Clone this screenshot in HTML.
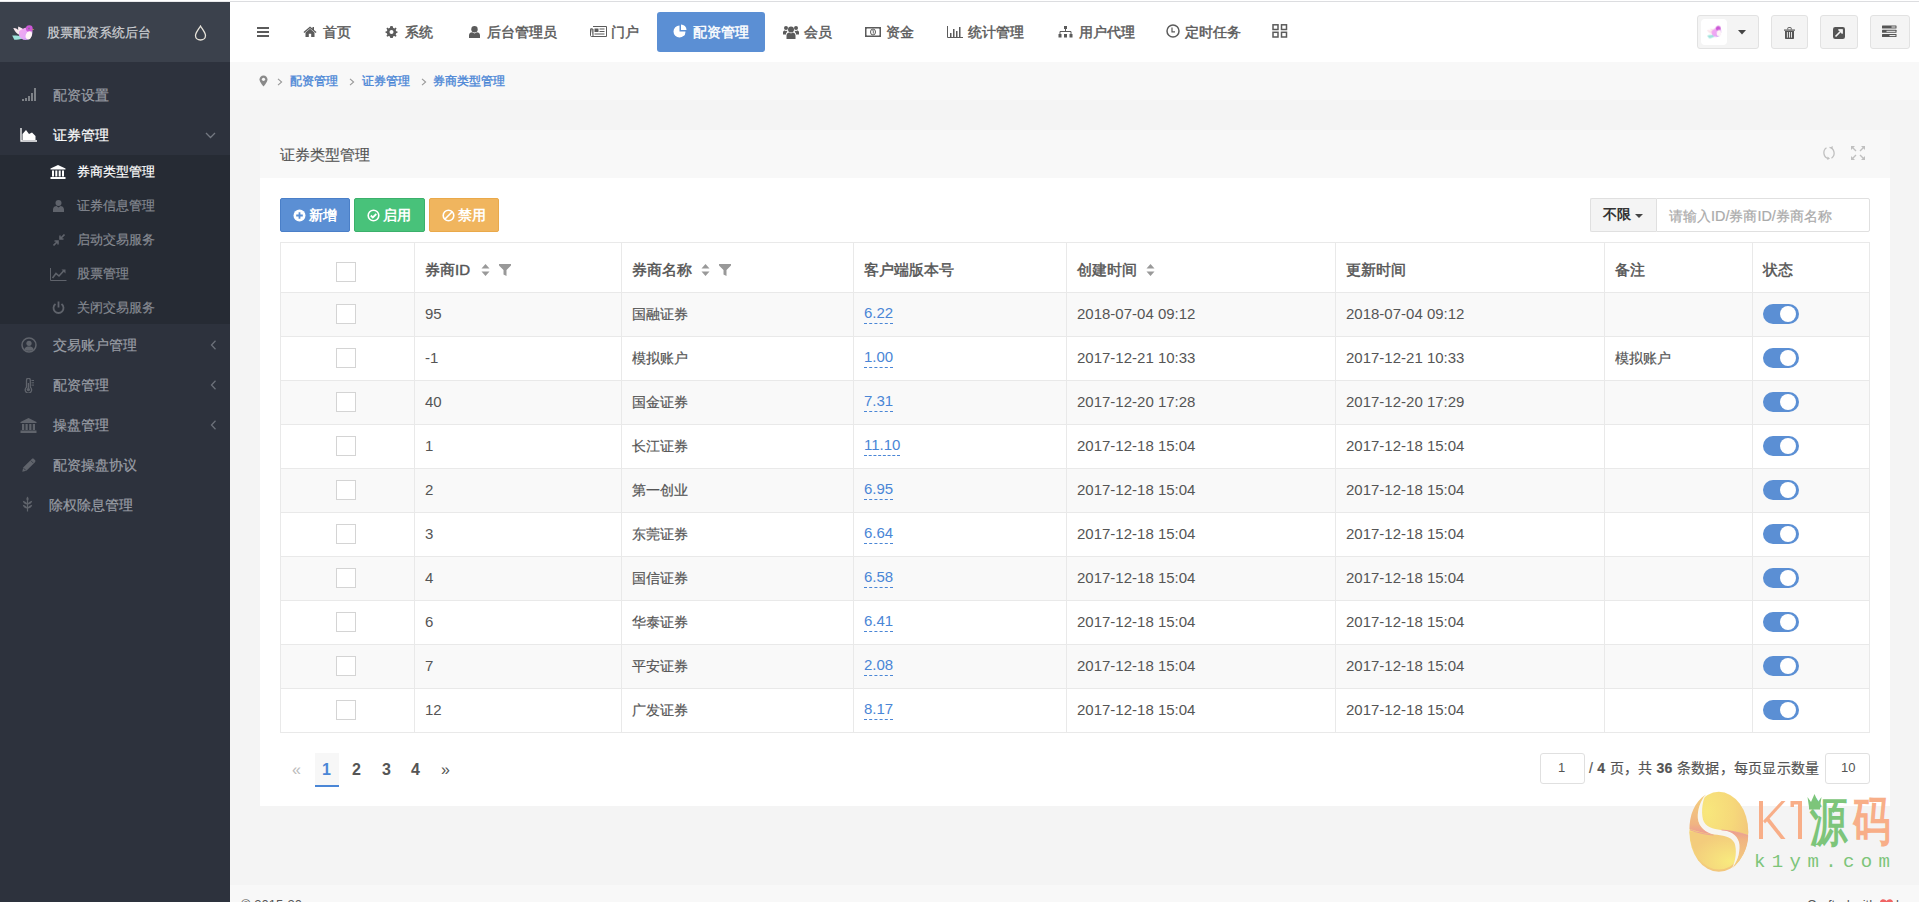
<!DOCTYPE html>
<html><head><meta charset="utf-8"><title>券商类型管理</title>
<style>
html,body{margin:0;padding:0;}
body{width:1919px;height:902px;overflow:hidden;position:relative;background:#f3f3f3;font-family:"Liberation Sans",sans-serif;}
b{font-weight:bold}
</style></head><body>
<div style="position:absolute;left:0px;top:0px;width:1919px;height:1px;background:#fff"></div><div style="position:absolute;left:230px;top:1px;width:1689px;height:1px;background:#dcdde0"></div><div style="position:absolute;left:0px;top:1px;width:230px;height:1px;background:#e9e9eb"></div><div style="position:absolute;left:230px;top:2px;width:1689px;height:60px;background:#fff"></div><div style="position:absolute;left:230px;top:62px;width:1689px;height:38px;background:#f8f8f8"></div><div style="position:absolute;left:230px;top:100px;width:1689px;height:785px;background:#f4f4f4"></div><div style="position:absolute;left:230px;top:885px;width:1689px;height:17px;background:#f8f8f8"></div><div style="position:absolute;left:0px;top:2px;width:230px;height:900px;background:#2d323d"></div><div style="position:absolute;left:0px;top:2px;width:230px;height:60px;background:#3b414c"></div><div style="position:absolute;left:0px;top:155px;width:230px;height:169px;background:#262b34"></div><svg style="position:absolute;left:5px;top:18px;" width="34" height="26" viewBox="0 0 34 26">
<defs><linearGradient id="bd" x1="0" y1="0" x2="1" y2="1"><stop offset="0" stop-color="#f6a8ef"/><stop offset="0.6" stop-color="#e4a6f5"/><stop offset="1" stop-color="#9b7fe6"/></linearGradient></defs>
<path d="M7.2 17.6 C10 17.4 14 17.6 17.5 18.8 L18.5 20.5 C15 21.5 12 21.8 9.3 21.8 Z" fill="#9fe3dc"/>
<path d="M8.3 10 C10 9.8 12 10.5 13.3 12 C13 10.5 13 9.5 13.4 8.6 C15.5 9.5 17.5 10.5 19 11.5 L17 17.5 C13.5 17 10.5 15 8.3 10Z" fill="#fbeaf0"/>
<path d="M14 13.5 C16 11.5 19 10 21.5 9.5 C25 8.5 27.5 10.5 27.5 13.5 C27.5 18 25 21.5 21 22 C18 22.3 15.5 20.5 14 17.5 Z" fill="url(#bd)"/>
<circle cx="24.3" cy="10.6" r="3.4" fill="#cc58d6"/>
<circle cx="24" cy="10.5" r="0.9" fill="#8a6a90"/>
<ellipse cx="23.8" cy="17.3" rx="3" ry="4.2" transform="rotate(20 23.8 17.3)" fill="#fff3f6"/>
<path d="M27.5 11 L29.3 11.5 L27.5 12.2Z" fill="#e9a86a"/>
</svg><div style="position:absolute;left:47px;top:23px;line-height:20px;font-size:13px;color:#cfd1d5;font-weight:normal;white-space:nowrap;-webkit-text-stroke-width:0.2px;">股票配资系统后台</div><svg style="position:absolute;left:194px;top:25px;" width="13" height="16" viewBox="0 0 13 16"><path d="M6.5 1 C4 5 1.5 8 1.5 10.5 C1.5 13.3 3.8 15 6.5 15 C9.2 15 11.5 13.3 11.5 10.5 C11.5 8 9 5 6.5 1Z" fill="none" stroke="#e8e4da" stroke-width="1.3"/></svg><svg style="position:absolute;left:22px;top:88px;" width="15" height="14" viewBox="0 0 15 14"><rect x="0" y="11" width="2" height="2" fill="#7d8187"/><rect x="3" y="10" width="2" height="3" fill="#7d8187"/><rect x="6" y="8" width="2" height="5" fill="#7d8187"/><rect x="9" y="5" width="2" height="8" fill="#7d8187"/><rect x="12" y="0" width="2" height="13" fill="#7d8187"/></svg><div style="position:absolute;left:53px;top:85px;line-height:20px;font-size:14px;color:#9a9ea5;font-weight:normal;white-space:nowrap;-webkit-text-stroke-width:0.2px;">配资设置</div><svg style="position:absolute;left:20px;top:128px;" width="18" height="14" viewBox="0 0 18 14"><path d="M1 0 V13 H17" fill="none" stroke="#fff" stroke-width="1.3"/><path d="M2.5 12 V6 L6 2 L9 6 L12 4.5 L15.5 8 V12Z" fill="#fff"/></svg><div style="position:absolute;left:53px;top:125px;line-height:20px;font-size:14px;color:#ffffff;font-weight:normal;white-space:nowrap;-webkit-text-stroke-width:0.2px;">证券管理</div><svg style="position:absolute;left:205px;top:132px;" width="11" height="7" viewBox="0 0 11 7"><path d="M1 1 L5.5 5.5 L10 1" fill="none" stroke="#737881" stroke-width="1.3"/></svg><svg style="position:absolute;left:50px;top:165px;" width="16" height="14" viewBox="0 0 16 14"><path d="M8 0 L15.5 3.5 V4.5 H0.5 V3.5Z" fill="#fff"/><rect x="2" y="5.5" width="2" height="6" fill="#fff"/><rect x="5.3" y="5.5" width="2" height="6" fill="#fff"/><rect x="8.7" y="5.5" width="2" height="6" fill="#fff"/><rect x="12" y="5.5" width="2" height="6" fill="#fff"/><rect x="0.5" y="12" width="15" height="2" fill="#fff"/></svg><div style="position:absolute;left:77px;top:162px;line-height:20px;font-size:13px;color:#ffffff;font-weight:normal;white-space:nowrap;-webkit-text-stroke-width:0.2px;">券商类型管理</div><svg style="position:absolute;left:53px;top:200px;" width="11" height="12" viewBox="0 0 11 12"><circle cx="5.5" cy="3" r="3" fill="#5f636b"/><path d="M0 12 V9.5 C0 7 2 6 3.5 6 L5.5 7.5 L7.5 6 C9 6 11 7 11 9.5 V12Z" fill="#5f636b"/></svg><div style="position:absolute;left:77px;top:196px;line-height:20px;font-size:13px;color:#858991;font-weight:normal;white-space:nowrap;-webkit-text-stroke-width:0.2px;">证券信息管理</div><svg style="position:absolute;left:53px;top:234px;" width="12" height="12" viewBox="0 0 12 12"><path d="M11.5 0.5 L7.5 4.5 M7 1.5 V5 H10.5 M0.5 11.5 L4.5 7.5 M1.5 7 H5 V10.5" fill="none" stroke="#5f636b" stroke-width="1.6"/></svg><div style="position:absolute;left:77px;top:230px;line-height:20px;font-size:13px;color:#858991;font-weight:normal;white-space:nowrap;-webkit-text-stroke-width:0.2px;">启动交易服务</div><svg style="position:absolute;left:50px;top:268px;" width="17" height="13" viewBox="0 0 17 13"><path d="M0.5 0 V12.5 H16.5" fill="none" stroke="#5f636b" stroke-width="1"/><path d="M2.5 10 L6 5.5 L9 8 L14 2.5" fill="none" stroke="#5f636b" stroke-width="1.6"/><path d="M11.5 1.5 H15.5 V5.5Z" fill="#5f636b"/></svg><div style="position:absolute;left:77px;top:264px;line-height:20px;font-size:13px;color:#858991;font-weight:normal;white-space:nowrap;-webkit-text-stroke-width:0.2px;">股票管理</div><svg style="position:absolute;left:52px;top:301px;" width="13" height="13" viewBox="0 0 13 13"><path d="M3.5 3 A5 5 0 1 0 9.5 3" fill="none" stroke="#5f636b" stroke-width="1.8"/><path d="M6.5 0.5 V6.5" stroke="#5f636b" stroke-width="1.8"/></svg><div style="position:absolute;left:77px;top:298px;line-height:20px;font-size:13px;color:#858991;font-weight:normal;white-space:nowrap;-webkit-text-stroke-width:0.2px;">关闭交易服务</div><svg style="position:absolute;left:21px;top:337px;" width="16" height="16" viewBox="0 0 16 16"><circle cx="8" cy="8" r="7" fill="none" stroke="#60646c" stroke-width="1.5"/><circle cx="8" cy="6.3" r="2.6" fill="#60646c"/><path d="M3.2 12.5 C4 10 6 9.5 8 9.5 C10 9.5 12 10 12.8 12.5 C11 14.3 5 14.3 3.2 12.5Z" fill="#60646c"/></svg><div style="position:absolute;left:53px;top:335px;line-height:20px;font-size:14px;color:#9a9ea5;font-weight:normal;white-space:nowrap;-webkit-text-stroke-width:0.2px;">交易账户管理</div><svg style="position:absolute;left:210px;top:340px;" width="7" height="10" viewBox="0 0 7 10"><path d="M5.5 0.8 L1.5 5 L5.5 9.2" fill="none" stroke="#6b7079" stroke-width="1.3"/></svg><svg style="position:absolute;left:24px;top:378px;" width="11" height="15" viewBox="0 0 11 15"><path d="M2.5 2.2 A1.9 1.9 0 0 1 6.3 2.2 V9.3 A3.2 3.2 0 1 1 2.5 9.3Z" fill="none" stroke="#60646c" stroke-width="1.3"/><circle cx="4.4" cy="11.6" r="1.7" fill="#60646c"/><path d="M4.4 5 V11" stroke="#60646c" stroke-width="1.3"/><path d="M7.5 2.5 H10 M7.5 4.8 H10 M7.5 7.1 H10" stroke="#60646c" stroke-width="1"/></svg><div style="position:absolute;left:53px;top:375px;line-height:20px;font-size:14px;color:#9a9ea5;font-weight:normal;white-space:nowrap;-webkit-text-stroke-width:0.2px;">配资管理</div><svg style="position:absolute;left:210px;top:380px;" width="7" height="10" viewBox="0 0 7 10"><path d="M5.5 0.8 L1.5 5 L5.5 9.2" fill="none" stroke="#6b7079" stroke-width="1.3"/></svg><svg style="position:absolute;left:20px;top:418px;" width="17" height="15" viewBox="0 0 17 15"><path d="M8.5 0 L16.5 4 V5 H0.5 V4Z" fill="#60646c"/><rect x="2" y="6" width="2.2" height="6" fill="#60646c"/><rect x="5.5" y="6" width="2.2" height="6" fill="#60646c"/><rect x="9.2" y="6" width="2.2" height="6" fill="#60646c"/><rect x="12.8" y="6" width="2.2" height="6" fill="#60646c"/><rect x="0.5" y="12.5" width="16" height="2.5" fill="#60646c"/></svg><div style="position:absolute;left:53px;top:415px;line-height:20px;font-size:14px;color:#9a9ea5;font-weight:normal;white-space:nowrap;-webkit-text-stroke-width:0.2px;">操盘管理</div><svg style="position:absolute;left:210px;top:420px;" width="7" height="10" viewBox="0 0 7 10"><path d="M5.5 0.8 L1.5 5 L5.5 9.2" fill="none" stroke="#6b7079" stroke-width="1.3"/></svg><svg style="position:absolute;left:22px;top:458px;" width="14" height="14" viewBox="0 0 14 14"><path d="M0.3 13.7 L1.2 9.6 L9.8 1 C10.4 0.4 11.3 0.4 11.9 1 L13 2.1 C13.6 2.7 13.6 3.6 13 4.2 L4.4 12.8Z" fill="#60646c"/><path d="M1.6 10.2 L3.8 12.4" stroke="#2d323d" stroke-width="0.8"/><path d="M8.8 2.6 L11.4 5.2" stroke="#2d323d" stroke-width="0.7"/></svg><div style="position:absolute;left:53px;top:455px;line-height:20px;font-size:14px;color:#9a9ea5;font-weight:normal;white-space:nowrap;-webkit-text-stroke-width:0.2px;">配资操盘协议</div><svg style="position:absolute;left:22px;top:496px;" width="11" height="16" viewBox="0 0 11 16"><path d="M5.5 0.5 C7 2 7 4 5.5 5.5 C4 4 4 2 5.5 0.5Z" fill="#60646c"/><path d="M5.5 15.5 V5" stroke="#60646c" stroke-width="1.2"/><path d="M5.5 8.5 C3 8.5 1 7 0.8 4.8 C3 5 5 6.5 5.5 8.5Z M5.5 8.5 C8 8.5 10 7 10.2 4.8 C8 5 6 6.5 5.5 8.5Z M5.5 12.5 C3 12.5 1 11 0.8 8.8 C3 9 5 10.5 5.5 12.5Z M5.5 12.5 C8 12.5 10 11 10.2 8.8 C8 9 6 10.5 5.5 12.5Z" fill="#60646c"/></svg><div style="position:absolute;left:49px;top:495px;line-height:20px;font-size:14px;color:#9a9ea5;font-weight:normal;white-space:nowrap;-webkit-text-stroke-width:0.2px;">除权除息管理</div><svg style="position:absolute;left:257px;top:27px;" width="13" height="10" viewBox="0 0 13 10"><rect x="0" y="0" width="12" height="2" fill="#5b5b5b"/><rect x="0" y="4" width="12" height="2" fill="#5b5b5b"/><rect x="0" y="8" width="12" height="2" fill="#5b5b5b"/></svg><svg style="position:absolute;left:303px;top:26px;" width="14" height="11" viewBox="0 0 14 11"><path d="M7 0.5 L0.5 6 L1.3 7 L7 2.2 L12.7 7 L13.5 6 L11 3.9 V1 H9.5 V2.6Z" fill="#5b5b5b"/><path d="M2.5 6.5 L7 2.8 L11.5 6.5 V11 H8.2 V7.8 H5.8 V11 H2.5Z" fill="#5b5b5b"/></svg><div style="position:absolute;left:323px;top:22px;line-height:20px;font-size:14px;color:#5b5b5b;font-weight:normal;white-space:nowrap;-webkit-text-stroke-width:0.2px;-webkit-text-stroke-width:0.45px">首页</div><svg style="position:absolute;left:385px;top:26px;" width="13" height="12" viewBox="0 0 13 13"><path d="M6.5 0 L7.9 0.3 L8.2 2 L9.6 2.7 L11 1.7 L12 2.8 L11 4.3 L11.6 5.6 L13 6 V7.4 L11.5 7.8 L11 9.2 L12 10.6 L11 11.7 L9.5 10.8 L8.2 11.4 L7.9 13 H6.5 L5.2 13 L4.8 11.4 L3.5 10.8 L2 11.7 L1 10.6 L2 9.2 L1.5 7.8 L0 7.4 V6 L1.4 5.6 L2 4.3 L1 2.8 L2 1.7 L3.4 2.7 L4.8 2 L5.1 0.3Z" fill="#5b5b5b"/><circle cx="6.5" cy="6.5" r="2.2" fill="#fff"/></svg><div style="position:absolute;left:405px;top:22px;line-height:20px;font-size:14px;color:#5b5b5b;font-weight:normal;white-space:nowrap;-webkit-text-stroke-width:0.2px;-webkit-text-stroke-width:0.45px">系统</div><svg style="position:absolute;left:469px;top:26px;" width="11" height="12" viewBox="0 0 11 12"><circle cx="5.5" cy="3.2" r="3.2" fill="#5b5b5b"/><path d="M0 12 V9.2 C0 7.2 1.5 6.2 3.2 6.2 L5.5 7.4 L7.8 6.2 C9.5 6.2 11 7.2 11 9.2 V12Z" fill="#5b5b5b"/></svg><div style="position:absolute;left:487px;top:22px;line-height:20px;font-size:14px;color:#5b5b5b;font-weight:normal;white-space:nowrap;-webkit-text-stroke-width:0.2px;-webkit-text-stroke-width:0.45px">后台管理员</div><svg style="position:absolute;left:590px;top:26px;" width="17" height="11" viewBox="0 0 17 11"><path d="M3 0.5 H16.5 V10.5 H1.5 C0.8 10.5 0.5 10 0.5 9.5 V3 H2" fill="none" stroke="#5b5b5b" stroke-width="1"/><path d="M0.5 3 H3 V10" fill="#aaa" stroke="#5b5b5b" stroke-width="1"/><rect x="4.5" y="2.5" width="4" height="3.5" fill="#5b5b5b"/><rect x="9.5" y="2.5" width="5" height="1" fill="#5b5b5b"/><rect x="9.5" y="5" width="5" height="1" fill="#5b5b5b"/><rect x="4.5" y="7.5" width="10" height="1" fill="#5b5b5b"/></svg><div style="position:absolute;left:611px;top:22px;line-height:20px;font-size:14px;color:#5b5b5b;font-weight:normal;white-space:nowrap;-webkit-text-stroke-width:0.2px;-webkit-text-stroke-width:0.45px">门户</div><div style="position:absolute;left:657px;top:12px;width:108px;height:40px;background:#5b8fd4;border-radius:3px"></div><svg style="position:absolute;left:673px;top:24px;" width="15" height="14" viewBox="0 0 15 14"><path d="M6.5 1.5 A6 6 0 1 0 12.5 7.5 H6.5Z" fill="#fff"/><path d="M8 0.5 A5.5 5.5 0 0 1 13.5 6 H8Z" fill="#fff"/><path d="M7.6 8.6 L12.2 8.6 A5.8 5.8 0 0 1 11 12 Z" fill="#fff"/></svg><div style="position:absolute;left:693px;top:22px;line-height:20px;font-size:14px;color:#ffffff;font-weight:normal;white-space:nowrap;-webkit-text-stroke-width:0.2px;-webkit-text-stroke-width:0.45px">配资管理</div><svg style="position:absolute;left:783px;top:25px;" width="16" height="14" viewBox="0 0 16 14"><circle cx="8" cy="4.5" r="3" fill="#5b5b5b"/><circle cx="3" cy="3" r="2" fill="#5b5b5b"/><circle cx="13" cy="3" r="2" fill="#5b5b5b"/><path d="M3.5 14 V10.5 C3.5 8.5 5 7.5 6.5 7.5 L8 8.5 L9.5 7.5 C11 7.5 12.5 8.5 12.5 10.5 V14Z" fill="#5b5b5b"/><path d="M0 9.5 V7.3 C0 6 1 5.5 2 5.5 L3 6.2 L4.2 5.6 C4.5 6.5 4 7 3 8.5 V9.5Z" fill="#5b5b5b"/><path d="M16 9.5 V7.3 C16 6 15 5.5 14 5.5 L13 6.2 L11.8 5.6 C11.5 6.5 12 7 13 8.5 V9.5Z" fill="#5b5b5b"/></svg><div style="position:absolute;left:804px;top:22px;line-height:20px;font-size:14px;color:#5b5b5b;font-weight:normal;white-space:nowrap;-webkit-text-stroke-width:0.2px;-webkit-text-stroke-width:0.45px">会员</div><svg style="position:absolute;left:865px;top:27px;" width="16" height="10" viewBox="0 0 16 10"><rect x="0.75" y="0.75" width="14.5" height="8.5" fill="none" stroke="#5b5b5b" stroke-width="1.5"/><path d="M0 0 H3 L0 3Z M16 0 H13 L16 3Z M0 10 H3 L0 7Z M16 10 H13 L16 7Z" fill="#5b5b5b"/><ellipse cx="8" cy="5" rx="2.5" ry="3" fill="none" stroke="#5b5b5b" stroke-width="1"/><path d="M7.5 3.5 H8.3 V6.6" stroke="#5b5b5b" stroke-width="0.9" fill="none"/></svg><div style="position:absolute;left:886px;top:22px;line-height:20px;font-size:14px;color:#5b5b5b;font-weight:normal;white-space:nowrap;-webkit-text-stroke-width:0.2px;-webkit-text-stroke-width:0.45px">资金</div><svg style="position:absolute;left:947px;top:26px;" width="16" height="12" viewBox="0 0 16 12"><path d="M0.5 0 V11.5 H16" fill="none" stroke="#5b5b5b" stroke-width="1"/><rect x="3" y="7" width="1.5" height="4" fill="#5b5b5b"/><rect x="6" y="3" width="1.5" height="8" fill="#5b5b5b"/><rect x="9" y="5" width="1.5" height="6" fill="#5b5b5b"/><rect x="12" y="1" width="1.5" height="10" fill="#5b5b5b"/></svg><div style="position:absolute;left:968px;top:22px;line-height:20px;font-size:14px;color:#5b5b5b;font-weight:normal;white-space:nowrap;-webkit-text-stroke-width:0.2px;-webkit-text-stroke-width:0.45px">统计管理</div><svg style="position:absolute;left:1058px;top:26px;" width="15" height="12" viewBox="0 0 15 12"><rect x="6" y="0" width="3" height="3" fill="#5b5b5b"/><path d="M7.5 3 V5.5 M2 8 V5.5 H13 V8" fill="none" stroke="#5b5b5b" stroke-width="1"/><rect x="0.5" y="8" width="3" height="3.5" fill="#5b5b5b"/><rect x="6" y="8" width="3" height="3.5" fill="#5b5b5b"/><rect x="11.5" y="8" width="3" height="3.5" fill="#5b5b5b"/></svg><div style="position:absolute;left:1079px;top:22px;line-height:20px;font-size:14px;color:#5b5b5b;font-weight:normal;white-space:nowrap;-webkit-text-stroke-width:0.2px;-webkit-text-stroke-width:0.45px">用户代理</div><svg style="position:absolute;left:1166px;top:24px;" width="14" height="14" viewBox="0 0 14 14"><circle cx="7" cy="7" r="6" fill="none" stroke="#5b5b5b" stroke-width="1.5"/><path d="M6 3.5 V7.8 H9" fill="none" stroke="#5b5b5b" stroke-width="1.2"/></svg><div style="position:absolute;left:1185px;top:22px;line-height:20px;font-size:14px;color:#5b5b5b;font-weight:normal;white-space:nowrap;-webkit-text-stroke-width:0.2px;-webkit-text-stroke-width:0.45px">定时任务</div><svg style="position:absolute;left:1272px;top:24px;" width="16" height="14" viewBox="0 0 16 14"><rect x="1" y="0.8" width="5" height="4.7" fill="none" stroke="#5b5b5b" stroke-width="1.5"/><rect x="9.5" y="0.8" width="5" height="4.7" fill="none" stroke="#5b5b5b" stroke-width="1.5"/><rect x="1" y="8.3" width="5" height="4.7" fill="none" stroke="#5b5b5b" stroke-width="1.5"/><rect x="9.5" y="8.3" width="5" height="4.7" fill="none" stroke="#5b5b5b" stroke-width="1.5"/></svg><div style="position:absolute;left:1697px;top:15px;width:60px;height:32px;background:#f4f4f4;border:1px solid #e2e2e2;border-radius:3px"></div><div style="position:absolute;left:1701px;top:19px;width:26px;height:26px;background:#fff;border-radius:4px"></div><svg style="position:absolute;left:1700px;top:20px;" width="28" height="24" viewBox="0 0 28 24">
<defs><filter id="bl" x="-20%" y="-20%" width="140%" height="140%"><feGaussianBlur stdDeviation="0.45"/></filter>
<linearGradient id="bd2" x1="0" y1="0" x2="1" y2="1"><stop offset="0" stop-color="#f6a8ef"/><stop offset="0.6" stop-color="#e9a6f5"/><stop offset="1" stop-color="#9b7fe6"/></linearGradient></defs>
<g filter="url(#bl)" transform="translate(7 7) rotate(-12 11 7) scale(0.72) translate(-7 -8.6)">
<path d="M7.2 17.6 C10 17.4 14 17.6 17.5 18.8 L18.5 20.5 C15 21.5 12 21.8 9.3 21.8 Z" fill="#9fe3dc"/>
<path d="M8.3 10 C10 9.8 12 10.5 13.3 12 C13 10.5 13 9.5 13.4 8.6 C15.5 9.5 17.5 10.5 19 11.5 L17 17.5 C13.5 17 10.5 15 8.3 10Z" fill="#fbe3ea"/>
<path d="M14 13.5 C16 11.5 19 10 21.5 9.5 C25 8.5 27.5 10.5 27.5 13.5 C27.5 18 25 21.5 21 22 C18 22.3 15.5 20.5 14 17.5 Z" fill="url(#bd2)"/>
<circle cx="24.3" cy="10.6" r="3.4" fill="#cc58d6"/>
<ellipse cx="23.8" cy="17.3" rx="3" ry="4.2" transform="rotate(20 23.8 17.3)" fill="#fff3f6"/>
</g>
</svg><svg style="position:absolute;left:1738px;top:30px;" width="8" height="5" viewBox="0 0 8 5"><path d="M0 0 H8 L4 4.5Z" fill="#444"/></svg><div style="position:absolute;left:1771px;top:15px;width:35px;height:32px;background:#f4f4f4;border:1px solid #e2e2e2;border-radius:3px"></div><svg style="position:absolute;left:1784px;top:27px;" width="11" height="12" viewBox="0 0 11 12"><path d="M0 2.5 H11 V3.7 H0Z" fill="#555"/><path d="M3.8 2.5 V1.2 C3.8 0.6 4.2 0.4 4.6 0.4 H6.4 C6.8 0.4 7.2 0.6 7.2 1.2 V2.5" fill="none" stroke="#555" stroke-width="1"/><path d="M1 4 H10 V11 C10 11.6 9.6 12 9 12 H2 C1.4 12 1 11.6 1 11Z" fill="#555"/><rect x="2.9" y="5" width="0.9" height="5.6" fill="#f4f4f4"/><rect x="5" y="5" width="0.9" height="5.6" fill="#f4f4f4"/><rect x="7.1" y="5" width="0.9" height="5.6" fill="#f4f4f4"/></svg><div style="position:absolute;left:1820px;top:15px;width:36px;height:32px;background:#f4f4f4;border:1px solid #e2e2e2;border-radius:3px"></div><svg style="position:absolute;left:1833px;top:27px;" width="12" height="12" viewBox="0 0 12 12"><rect x="0" y="0" width="12" height="12" rx="2.2" fill="#555"/><path d="M2.5 9.5 L8.5 3.5 M5.5 3 H9 V6.5" fill="none" stroke="#f4f4f4" stroke-width="1.6"/><path d="M9.5 2.5 V7 L5 2.5Z" fill="#f4f4f4"/></svg><div style="position:absolute;left:1870px;top:15px;width:38px;height:32px;background:#f4f4f4;border:1px solid #e2e2e2;border-radius:3px"></div><svg style="position:absolute;left:1882px;top:25px;" width="15" height="13" viewBox="0 0 15 13"><rect x="0" y="0.5" width="14.5" height="3" rx="0.5" fill="#555"/><rect x="0" y="4.8" width="14.5" height="3" rx="0.5" fill="#555"/><rect x="0" y="9.1" width="14.5" height="3" rx="0.5" fill="#555"/><rect x="9.5" y="1.5" width="4" height="1" fill="#f4f4f4"/><rect x="4.5" y="5.8" width="9" height="1" fill="#f4f4f4"/><rect x="7.5" y="10.1" width="6" height="1" fill="#f4f4f4"/></svg><svg style="position:absolute;left:259px;top:75px;" width="9" height="12" viewBox="0 0 9 12"><path d="M4.5 0.5 C2.2 0.5 0.5 2.3 0.5 4.5 C0.5 7 4.5 11.5 4.5 11.5 C4.5 11.5 8.5 7 8.5 4.5 C8.5 2.3 6.8 0.5 4.5 0.5Z" fill="#8a8a8a"/><circle cx="4.5" cy="4.3" r="1.6" fill="#f8f8f8"/></svg><svg style="position:absolute;left:277px;top:78px;" width="6" height="8" viewBox="0 0 6 8"><path d="M1 0.8 L4.6 4 L1 7.2" fill="none" stroke="#999" stroke-width="1.1"/></svg><div style="position:absolute;left:290px;top:71px;line-height:20px;font-size:12px;color:#4a86d6;font-weight:normal;white-space:nowrap;-webkit-text-stroke-width:0.2px;-webkit-text-stroke-width:0.35px">配资管理</div><svg style="position:absolute;left:349px;top:78px;" width="6" height="8" viewBox="0 0 6 8"><path d="M1 0.8 L4.6 4 L1 7.2" fill="none" stroke="#999" stroke-width="1.1"/></svg><div style="position:absolute;left:362px;top:71px;line-height:20px;font-size:12px;color:#4a86d6;font-weight:normal;white-space:nowrap;-webkit-text-stroke-width:0.2px;-webkit-text-stroke-width:0.35px">证券管理</div><svg style="position:absolute;left:421px;top:78px;" width="6" height="8" viewBox="0 0 6 8"><path d="M1 0.8 L4.6 4 L1 7.2" fill="none" stroke="#999" stroke-width="1.1"/></svg><div style="position:absolute;left:433px;top:71px;line-height:20px;font-size:12px;color:#4a86d6;font-weight:normal;white-space:nowrap;-webkit-text-stroke-width:0.2px;-webkit-text-stroke-width:0.35px">券商类型管理</div><div style="position:absolute;left:260px;top:130px;width:1630px;height:48px;background:#f8f8f8"></div><div style="position:absolute;left:260px;top:178px;width:1630px;height:628px;background:#fff"></div><div style="position:absolute;left:280px;top:145px;line-height:20px;font-size:15px;color:#555;font-weight:normal;white-space:nowrap;-webkit-text-stroke-width:0.2px;">证券类型管理</div><svg style="position:absolute;left:1822px;top:145px;" width="16" height="16" viewBox="0 0 16 16"><path d="M4.5 2.8 A6 6 0 0 0 6.5 13.6" fill="none" stroke="#c0c0c0" stroke-width="1.3"/><path d="M9.5 13.2 A6 6 0 0 0 7.5 2.4" fill="none" stroke="#c0c0c0" stroke-width="1.3"/><path d="M5.5 11.5 L8 13.5 L5.2 15Z" fill="#c0c0c0"/><path d="M10.5 4.5 L8 2.5 L10.8 1Z" fill="#c0c0c0"/></svg><svg style="position:absolute;left:1850px;top:145px;" width="16" height="16" viewBox="0 0 16 16"><path d="M1.5 1.5 L6 6 M14.5 1.5 L10 6 M1.5 14.5 L6 10 M14.5 14.5 L10 10" stroke="#c0c0c0" stroke-width="1.4"/><path d="M1 1 H5 L1 5Z M15 1 H11 L15 5Z M1 15 H5 L1 11Z M15 15 H11 L15 11Z" fill="#c0c0c0"/></svg><div style="position:absolute;left:280px;top:198px;width:68px;height:32px;background:#5b8fd4;border:1px solid #4a7fc8;border-radius:2px"></div><svg style="position:absolute;left:293px;top:209px;" width="13" height="13" viewBox="0 0 13 13"><circle cx="6.5" cy="6.5" r="6" fill="#fff"/><path d="M6.5 3.2 V9.8 M3.2 6.5 H9.8" stroke="#5b8fd4" stroke-width="1.8"/></svg><div style="position:absolute;left:309px;top:205px;line-height:20px;font-size:14px;color:#fff;font-weight:bold;white-space:nowrap;">新增</div><div style="position:absolute;left:354px;top:198px;width:69px;height:32px;background:#48c27a;border:1px solid #3bb06b;border-radius:2px"></div><svg style="position:absolute;left:367px;top:209px;" width="13" height="13" viewBox="0 0 13 13"><circle cx="6.5" cy="6.5" r="5.3" fill="none" stroke="#fff" stroke-width="1.6"/><path d="M3.8 6.5 L5.8 8.5 L9.3 5" fill="none" stroke="#fff" stroke-width="1.8"/></svg><div style="position:absolute;left:383px;top:205px;line-height:20px;font-size:14px;color:#fff;font-weight:bold;white-space:nowrap;">启用</div><div style="position:absolute;left:429px;top:198px;width:68px;height:32px;background:#f0b55e;border:1px solid #eaa94a;border-radius:2px"></div><svg style="position:absolute;left:442px;top:209px;" width="13" height="13" viewBox="0 0 13 13"><circle cx="6.5" cy="6.5" r="5.3" fill="none" stroke="#fff" stroke-width="1.6"/><path d="M3 10 L10 3" stroke="#fff" stroke-width="1.6"/></svg><div style="position:absolute;left:458px;top:205px;line-height:20px;font-size:14px;color:#fff;font-weight:bold;white-space:nowrap;">禁用</div><div style="position:absolute;left:1590px;top:198px;width:65px;height:32px;background:#f4f4f4;border:1px solid #e0e0e0;border-right:none;border-radius:2px 0 0 2px"></div><div style="position:absolute;left:1603px;top:204px;line-height:20px;font-size:14px;color:#333;font-weight:bold;white-space:nowrap;">不限</div><svg style="position:absolute;left:1635px;top:214px;" width="8" height="5" viewBox="0 0 8 5"><path d="M0 0 H8 L4 4Z" fill="#444"/></svg><div style="position:absolute;left:1656px;top:198px;width:212px;height:32px;background:#fff;border:1px solid #e0e0e0;border-radius:0 2px 2px 0"></div><div style="position:absolute;left:1669px;top:206px;line-height:20px;font-size:14.4px;color:#aaa;font-weight:normal;white-space:nowrap;-webkit-text-stroke-width:0.2px;">请输入ID/券商ID/券商名称</div><div style="position:absolute;left:280px;top:292px;width:1590px;height:44px;background:#f9f9f9"></div><div style="position:absolute;left:280px;top:380px;width:1590px;height:44px;background:#f9f9f9"></div><div style="position:absolute;left:280px;top:468px;width:1590px;height:44px;background:#f9f9f9"></div><div style="position:absolute;left:280px;top:556px;width:1590px;height:44px;background:#f9f9f9"></div><div style="position:absolute;left:280px;top:644px;width:1590px;height:44px;background:#f9f9f9"></div><div style="position:absolute;left:280px;top:242px;width:1590px;height:1px;background:#e9e9e9"></div><div style="position:absolute;left:280px;top:292px;width:1590px;height:1px;background:#e9e9e9"></div><div style="position:absolute;left:280px;top:336px;width:1590px;height:1px;background:#e9e9e9"></div><div style="position:absolute;left:280px;top:380px;width:1590px;height:1px;background:#e9e9e9"></div><div style="position:absolute;left:280px;top:424px;width:1590px;height:1px;background:#e9e9e9"></div><div style="position:absolute;left:280px;top:468px;width:1590px;height:1px;background:#e9e9e9"></div><div style="position:absolute;left:280px;top:512px;width:1590px;height:1px;background:#e9e9e9"></div><div style="position:absolute;left:280px;top:556px;width:1590px;height:1px;background:#e9e9e9"></div><div style="position:absolute;left:280px;top:600px;width:1590px;height:1px;background:#e9e9e9"></div><div style="position:absolute;left:280px;top:644px;width:1590px;height:1px;background:#e9e9e9"></div><div style="position:absolute;left:280px;top:688px;width:1590px;height:1px;background:#e9e9e9"></div><div style="position:absolute;left:280px;top:732px;width:1590px;height:1px;background:#e9e9e9"></div><div style="position:absolute;left:280px;top:242px;width:1px;height:491px;background:#e9e9e9"></div><div style="position:absolute;left:414px;top:242px;width:1px;height:491px;background:#e9e9e9"></div><div style="position:absolute;left:621px;top:242px;width:1px;height:491px;background:#e9e9e9"></div><div style="position:absolute;left:853px;top:242px;width:1px;height:491px;background:#e9e9e9"></div><div style="position:absolute;left:1066px;top:242px;width:1px;height:491px;background:#e9e9e9"></div><div style="position:absolute;left:1335px;top:242px;width:1px;height:491px;background:#e9e9e9"></div><div style="position:absolute;left:1604px;top:242px;width:1px;height:491px;background:#e9e9e9"></div><div style="position:absolute;left:1752px;top:242px;width:1px;height:491px;background:#e9e9e9"></div><div style="position:absolute;left:1869px;top:242px;width:1px;height:491px;background:#e9e9e9"></div><div style="position:absolute;left:336px;top:262px;width:18px;height:18px;border:1px solid #d4d4d4;background:#fff"></div><div style="position:absolute;left:425px;top:260px;line-height:20px;font-size:15px;color:#555;font-weight:normal;white-space:nowrap;-webkit-text-stroke-width:0.2px;-webkit-text-stroke-width:0.45px">券商ID</div><svg style="position:absolute;left:481px;top:264px;" width="9" height="12" viewBox="0 0 9 12"><path d="M4.5 0 L8.5 4.5 H0.5Z M4.5 12 L8.5 7.5 H0.5Z" fill="#999"/></svg><svg style="position:absolute;left:499px;top:264px;" width="12" height="12" viewBox="0 0 12 12"><path d="M0 0 H12 V1.5 L7.5 6 V12 L4.5 10.5 V6 L0 1.5Z" fill="#999"/></svg><div style="position:absolute;left:632px;top:260px;line-height:20px;font-size:15px;color:#555;font-weight:normal;white-space:nowrap;-webkit-text-stroke-width:0.2px;-webkit-text-stroke-width:0.45px">券商名称</div><svg style="position:absolute;left:701px;top:264px;" width="9" height="12" viewBox="0 0 9 12"><path d="M4.5 0 L8.5 4.5 H0.5Z M4.5 12 L8.5 7.5 H0.5Z" fill="#999"/></svg><svg style="position:absolute;left:719px;top:264px;" width="12" height="12" viewBox="0 0 12 12"><path d="M0 0 H12 V1.5 L7.5 6 V12 L4.5 10.5 V6 L0 1.5Z" fill="#999"/></svg><div style="position:absolute;left:864px;top:260px;line-height:20px;font-size:15px;color:#555;font-weight:normal;white-space:nowrap;-webkit-text-stroke-width:0.2px;-webkit-text-stroke-width:0.45px">客户端版本号</div><div style="position:absolute;left:1077px;top:260px;line-height:20px;font-size:15px;color:#555;font-weight:normal;white-space:nowrap;-webkit-text-stroke-width:0.2px;-webkit-text-stroke-width:0.45px">创建时间</div><svg style="position:absolute;left:1146px;top:264px;" width="9" height="12" viewBox="0 0 9 12"><path d="M4.5 0 L8.5 4.5 H0.5Z M4.5 12 L8.5 7.5 H0.5Z" fill="#999"/></svg><div style="position:absolute;left:1346px;top:260px;line-height:20px;font-size:15px;color:#555;font-weight:normal;white-space:nowrap;-webkit-text-stroke-width:0.2px;-webkit-text-stroke-width:0.45px">更新时间</div><div style="position:absolute;left:1615px;top:260px;line-height:20px;font-size:15px;color:#555;font-weight:normal;white-space:nowrap;-webkit-text-stroke-width:0.2px;-webkit-text-stroke-width:0.45px">备注</div><div style="position:absolute;left:1763px;top:260px;line-height:20px;font-size:15px;color:#555;font-weight:normal;white-space:nowrap;-webkit-text-stroke-width:0.2px;-webkit-text-stroke-width:0.45px">状态</div><div style="position:absolute;left:336px;top:304px;width:18px;height:18px;border:1px solid #d4d4d4;background:#fff"></div><div style="position:absolute;left:425px;top:304px;line-height:20px;font-size:15px;color:#555;font-weight:normal;white-space:nowrap;">95</div><div style="position:absolute;left:632px;top:304px;line-height:20px;font-size:14px;color:#555;font-weight:normal;white-space:nowrap;-webkit-text-stroke-width:0.2px;">国融证券</div><div style="position:absolute;left:864px;top:303px;line-height:20px;font-size:15px;color:#4a86d6;font-weight:normal;white-space:nowrap;border-bottom:1px dashed #4a86d6;line-height:20px;height:20px">6.22</div><div style="position:absolute;left:1077px;top:304px;line-height:20px;font-size:15px;color:#555;font-weight:normal;white-space:nowrap;">2018-07-04 09:12</div><div style="position:absolute;left:1346px;top:304px;line-height:20px;font-size:15px;color:#555;font-weight:normal;white-space:nowrap;">2018-07-04 09:12</div><div style="position:absolute;left:1763px;top:304px;width:36px;height:20px;background:#5b8fd4;border-radius:10px"></div><div style="position:absolute;left:1780px;top:306px;width:16px;height:16px;background:#fff;border-radius:8px"></div><div style="position:absolute;left:336px;top:348px;width:18px;height:18px;border:1px solid #d4d4d4;background:#fff"></div><div style="position:absolute;left:425px;top:348px;line-height:20px;font-size:15px;color:#555;font-weight:normal;white-space:nowrap;">-1</div><div style="position:absolute;left:632px;top:348px;line-height:20px;font-size:14px;color:#555;font-weight:normal;white-space:nowrap;-webkit-text-stroke-width:0.2px;">模拟账户</div><div style="position:absolute;left:864px;top:347px;line-height:20px;font-size:15px;color:#4a86d6;font-weight:normal;white-space:nowrap;border-bottom:1px dashed #4a86d6;line-height:20px;height:20px">1.00</div><div style="position:absolute;left:1077px;top:348px;line-height:20px;font-size:15px;color:#555;font-weight:normal;white-space:nowrap;">2017-12-21 10:33</div><div style="position:absolute;left:1346px;top:348px;line-height:20px;font-size:15px;color:#555;font-weight:normal;white-space:nowrap;">2017-12-21 10:33</div><div style="position:absolute;left:1615px;top:348px;line-height:20px;font-size:14px;color:#555;font-weight:normal;white-space:nowrap;-webkit-text-stroke-width:0.2px;">模拟账户</div><div style="position:absolute;left:1763px;top:348px;width:36px;height:20px;background:#5b8fd4;border-radius:10px"></div><div style="position:absolute;left:1780px;top:350px;width:16px;height:16px;background:#fff;border-radius:8px"></div><div style="position:absolute;left:336px;top:392px;width:18px;height:18px;border:1px solid #d4d4d4;background:#fff"></div><div style="position:absolute;left:425px;top:392px;line-height:20px;font-size:15px;color:#555;font-weight:normal;white-space:nowrap;">40</div><div style="position:absolute;left:632px;top:392px;line-height:20px;font-size:14px;color:#555;font-weight:normal;white-space:nowrap;-webkit-text-stroke-width:0.2px;">国金证券</div><div style="position:absolute;left:864px;top:391px;line-height:20px;font-size:15px;color:#4a86d6;font-weight:normal;white-space:nowrap;border-bottom:1px dashed #4a86d6;line-height:20px;height:20px">7.31</div><div style="position:absolute;left:1077px;top:392px;line-height:20px;font-size:15px;color:#555;font-weight:normal;white-space:nowrap;">2017-12-20 17:28</div><div style="position:absolute;left:1346px;top:392px;line-height:20px;font-size:15px;color:#555;font-weight:normal;white-space:nowrap;">2017-12-20 17:29</div><div style="position:absolute;left:1763px;top:392px;width:36px;height:20px;background:#5b8fd4;border-radius:10px"></div><div style="position:absolute;left:1780px;top:394px;width:16px;height:16px;background:#fff;border-radius:8px"></div><div style="position:absolute;left:336px;top:436px;width:18px;height:18px;border:1px solid #d4d4d4;background:#fff"></div><div style="position:absolute;left:425px;top:436px;line-height:20px;font-size:15px;color:#555;font-weight:normal;white-space:nowrap;">1</div><div style="position:absolute;left:632px;top:436px;line-height:20px;font-size:14px;color:#555;font-weight:normal;white-space:nowrap;-webkit-text-stroke-width:0.2px;">长江证券</div><div style="position:absolute;left:864px;top:435px;line-height:20px;font-size:15px;color:#4a86d6;font-weight:normal;white-space:nowrap;border-bottom:1px dashed #4a86d6;line-height:20px;height:20px">11.10</div><div style="position:absolute;left:1077px;top:436px;line-height:20px;font-size:15px;color:#555;font-weight:normal;white-space:nowrap;">2017-12-18 15:04</div><div style="position:absolute;left:1346px;top:436px;line-height:20px;font-size:15px;color:#555;font-weight:normal;white-space:nowrap;">2017-12-18 15:04</div><div style="position:absolute;left:1763px;top:436px;width:36px;height:20px;background:#5b8fd4;border-radius:10px"></div><div style="position:absolute;left:1780px;top:438px;width:16px;height:16px;background:#fff;border-radius:8px"></div><div style="position:absolute;left:336px;top:480px;width:18px;height:18px;border:1px solid #d4d4d4;background:#fff"></div><div style="position:absolute;left:425px;top:480px;line-height:20px;font-size:15px;color:#555;font-weight:normal;white-space:nowrap;">2</div><div style="position:absolute;left:632px;top:480px;line-height:20px;font-size:14px;color:#555;font-weight:normal;white-space:nowrap;-webkit-text-stroke-width:0.2px;">第一创业</div><div style="position:absolute;left:864px;top:479px;line-height:20px;font-size:15px;color:#4a86d6;font-weight:normal;white-space:nowrap;border-bottom:1px dashed #4a86d6;line-height:20px;height:20px">6.95</div><div style="position:absolute;left:1077px;top:480px;line-height:20px;font-size:15px;color:#555;font-weight:normal;white-space:nowrap;">2017-12-18 15:04</div><div style="position:absolute;left:1346px;top:480px;line-height:20px;font-size:15px;color:#555;font-weight:normal;white-space:nowrap;">2017-12-18 15:04</div><div style="position:absolute;left:1763px;top:480px;width:36px;height:20px;background:#5b8fd4;border-radius:10px"></div><div style="position:absolute;left:1780px;top:482px;width:16px;height:16px;background:#fff;border-radius:8px"></div><div style="position:absolute;left:336px;top:524px;width:18px;height:18px;border:1px solid #d4d4d4;background:#fff"></div><div style="position:absolute;left:425px;top:524px;line-height:20px;font-size:15px;color:#555;font-weight:normal;white-space:nowrap;">3</div><div style="position:absolute;left:632px;top:524px;line-height:20px;font-size:14px;color:#555;font-weight:normal;white-space:nowrap;-webkit-text-stroke-width:0.2px;">东莞证券</div><div style="position:absolute;left:864px;top:523px;line-height:20px;font-size:15px;color:#4a86d6;font-weight:normal;white-space:nowrap;border-bottom:1px dashed #4a86d6;line-height:20px;height:20px">6.64</div><div style="position:absolute;left:1077px;top:524px;line-height:20px;font-size:15px;color:#555;font-weight:normal;white-space:nowrap;">2017-12-18 15:04</div><div style="position:absolute;left:1346px;top:524px;line-height:20px;font-size:15px;color:#555;font-weight:normal;white-space:nowrap;">2017-12-18 15:04</div><div style="position:absolute;left:1763px;top:524px;width:36px;height:20px;background:#5b8fd4;border-radius:10px"></div><div style="position:absolute;left:1780px;top:526px;width:16px;height:16px;background:#fff;border-radius:8px"></div><div style="position:absolute;left:336px;top:568px;width:18px;height:18px;border:1px solid #d4d4d4;background:#fff"></div><div style="position:absolute;left:425px;top:568px;line-height:20px;font-size:15px;color:#555;font-weight:normal;white-space:nowrap;">4</div><div style="position:absolute;left:632px;top:568px;line-height:20px;font-size:14px;color:#555;font-weight:normal;white-space:nowrap;-webkit-text-stroke-width:0.2px;">国信证券</div><div style="position:absolute;left:864px;top:567px;line-height:20px;font-size:15px;color:#4a86d6;font-weight:normal;white-space:nowrap;border-bottom:1px dashed #4a86d6;line-height:20px;height:20px">6.58</div><div style="position:absolute;left:1077px;top:568px;line-height:20px;font-size:15px;color:#555;font-weight:normal;white-space:nowrap;">2017-12-18 15:04</div><div style="position:absolute;left:1346px;top:568px;line-height:20px;font-size:15px;color:#555;font-weight:normal;white-space:nowrap;">2017-12-18 15:04</div><div style="position:absolute;left:1763px;top:568px;width:36px;height:20px;background:#5b8fd4;border-radius:10px"></div><div style="position:absolute;left:1780px;top:570px;width:16px;height:16px;background:#fff;border-radius:8px"></div><div style="position:absolute;left:336px;top:612px;width:18px;height:18px;border:1px solid #d4d4d4;background:#fff"></div><div style="position:absolute;left:425px;top:612px;line-height:20px;font-size:15px;color:#555;font-weight:normal;white-space:nowrap;">6</div><div style="position:absolute;left:632px;top:612px;line-height:20px;font-size:14px;color:#555;font-weight:normal;white-space:nowrap;-webkit-text-stroke-width:0.2px;">华泰证券</div><div style="position:absolute;left:864px;top:611px;line-height:20px;font-size:15px;color:#4a86d6;font-weight:normal;white-space:nowrap;border-bottom:1px dashed #4a86d6;line-height:20px;height:20px">6.41</div><div style="position:absolute;left:1077px;top:612px;line-height:20px;font-size:15px;color:#555;font-weight:normal;white-space:nowrap;">2017-12-18 15:04</div><div style="position:absolute;left:1346px;top:612px;line-height:20px;font-size:15px;color:#555;font-weight:normal;white-space:nowrap;">2017-12-18 15:04</div><div style="position:absolute;left:1763px;top:612px;width:36px;height:20px;background:#5b8fd4;border-radius:10px"></div><div style="position:absolute;left:1780px;top:614px;width:16px;height:16px;background:#fff;border-radius:8px"></div><div style="position:absolute;left:336px;top:656px;width:18px;height:18px;border:1px solid #d4d4d4;background:#fff"></div><div style="position:absolute;left:425px;top:656px;line-height:20px;font-size:15px;color:#555;font-weight:normal;white-space:nowrap;">7</div><div style="position:absolute;left:632px;top:656px;line-height:20px;font-size:14px;color:#555;font-weight:normal;white-space:nowrap;-webkit-text-stroke-width:0.2px;">平安证券</div><div style="position:absolute;left:864px;top:655px;line-height:20px;font-size:15px;color:#4a86d6;font-weight:normal;white-space:nowrap;border-bottom:1px dashed #4a86d6;line-height:20px;height:20px">2.08</div><div style="position:absolute;left:1077px;top:656px;line-height:20px;font-size:15px;color:#555;font-weight:normal;white-space:nowrap;">2017-12-18 15:04</div><div style="position:absolute;left:1346px;top:656px;line-height:20px;font-size:15px;color:#555;font-weight:normal;white-space:nowrap;">2017-12-18 15:04</div><div style="position:absolute;left:1763px;top:656px;width:36px;height:20px;background:#5b8fd4;border-radius:10px"></div><div style="position:absolute;left:1780px;top:658px;width:16px;height:16px;background:#fff;border-radius:8px"></div><div style="position:absolute;left:336px;top:700px;width:18px;height:18px;border:1px solid #d4d4d4;background:#fff"></div><div style="position:absolute;left:425px;top:700px;line-height:20px;font-size:15px;color:#555;font-weight:normal;white-space:nowrap;">12</div><div style="position:absolute;left:632px;top:700px;line-height:20px;font-size:14px;color:#555;font-weight:normal;white-space:nowrap;-webkit-text-stroke-width:0.2px;">广发证券</div><div style="position:absolute;left:864px;top:699px;line-height:20px;font-size:15px;color:#4a86d6;font-weight:normal;white-space:nowrap;border-bottom:1px dashed #4a86d6;line-height:20px;height:20px">8.17</div><div style="position:absolute;left:1077px;top:700px;line-height:20px;font-size:15px;color:#555;font-weight:normal;white-space:nowrap;">2017-12-18 15:04</div><div style="position:absolute;left:1346px;top:700px;line-height:20px;font-size:15px;color:#555;font-weight:normal;white-space:nowrap;">2017-12-18 15:04</div><div style="position:absolute;left:1763px;top:700px;width:36px;height:20px;background:#5b8fd4;border-radius:10px"></div><div style="position:absolute;left:1780px;top:702px;width:16px;height:16px;background:#fff;border-radius:8px"></div><div style="position:absolute;left:292px;top:760px;line-height:20px;font-size:16px;color:#bbb;font-weight:normal;white-space:nowrap;">«</div><div style="position:absolute;left:315px;top:753px;width:24px;height:34px;background:#f7f7f7"></div><div style="position:absolute;left:315px;top:785px;width:24px;height:2px;background:#4a86d6"></div><div style="position:absolute;left:322px;top:760px;line-height:20px;font-size:16px;color:#4a86d6;font-weight:bold;white-space:nowrap;">1</div><div style="position:absolute;left:352px;top:760px;line-height:20px;font-size:16px;color:#555;font-weight:bold;white-space:nowrap;">2</div><div style="position:absolute;left:382px;top:760px;line-height:20px;font-size:16px;color:#555;font-weight:bold;white-space:nowrap;">3</div><div style="position:absolute;left:411px;top:760px;line-height:20px;font-size:16px;color:#555;font-weight:bold;white-space:nowrap;">4</div><div style="position:absolute;left:441px;top:760px;line-height:20px;font-size:16px;color:#555;font-weight:normal;white-space:nowrap;">»</div><div style="position:absolute;left:1540px;top:753px;width:43px;height:29px;border:1px solid #e0e0e0;border-radius:3px;background:#fff"></div><div style="position:absolute;left:1558px;top:758px;line-height:20px;font-size:13px;color:#555;font-weight:normal;white-space:nowrap;">1</div><div lang="zh-CN" style="position:absolute;left:1589px;top:758px;line-height:20px;font-size:14px;letter-spacing:0.27px;color:#555;white-space:nowrap;-webkit-text-stroke-width:0.2px">/ <b>4</b> 页，共 <b>36</b> 条数据，每页显示数量</div><div style="position:absolute;left:1825px;top:753px;width:43px;height:29px;border:1px solid #e0e0e0;border-radius:3px;background:#fff"></div><div style="position:absolute;left:1841px;top:758px;line-height:20px;font-size:13px;color:#555;font-weight:normal;white-space:nowrap;">10</div><div style="position:absolute;left:241px;top:895px;line-height:20px;font-size:13px;color:#555;font-weight:normal;white-space:nowrap;">© 2015-20</div><div style="position:absolute;left:1807px;top:895px;line-height:20px;font-size:13px;color:#555;font-weight:normal;white-space:nowrap;">Crafted with</div><svg style="position:absolute;left:1880px;top:899px;" width="13" height="11" viewBox="0 0 13 11"><path d="M6.5 11 L1 5.5 C-0.5 4 -0.3 1.2 2 0.4 C3.8 -0.2 5.5 0.6 6.5 2 C7.5 0.6 9.2 -0.2 11 0.4 C13.3 1.2 13.5 4 12 5.5Z" fill="#f06464"/></svg><div style="position:absolute;left:1896px;top:895px;line-height:20px;font-size:13px;color:#555;font-weight:normal;white-space:nowrap;">by</div><svg style="position:absolute;left:1684px;top:788px;" width="212" height="90" viewBox="0 0 212 90">
<defs>
<radialGradient id="eg1" cx="0.3" cy="0.25" r="0.75"><stop offset="0" stop-color="#f8e77c"/><stop offset="0.6" stop-color="#f6d87a"/><stop offset="1" stop-color="#f2c77c"/></radialGradient>
<radialGradient id="eg2" cx="0.7" cy="0.78" r="0.7"><stop offset="0" stop-color="#f8ea7e"/><stop offset="1" stop-color="#f3cc7c"/></radialGradient>
<linearGradient id="cr1" x1="0" y1="0" x2="0" y2="1"><stop offset="0" stop-color="#f4cf7e"/><stop offset="0.75" stop-color="#f0b482"/><stop offset="1" stop-color="#ec9a92"/></linearGradient>
<linearGradient id="cr2" x1="0" y1="1" x2="0" y2="0"><stop offset="0" stop-color="#f4cf7e"/><stop offset="0.75" stop-color="#f0b482"/><stop offset="1" stop-color="#ec9a92"/></linearGradient>
</defs>
<ellipse cx="34.85" cy="43.85" rx="29.45" ry="40" fill="url(#eg1)"/>
<path d="M5.5 43.85 A29.45 40 0 0 0 64.3 43.85 Z" fill="url(#eg2)"/>
<path d="M22 6.5 C10 14 5.4 28 5.6 41 C12 43 20 45.5 29 46 C22 44 14.5 39 13.8 30 C13.5 22 16 13 22 6.5Z" fill="url(#cr1)"/>
<path d="M48 80.5 C58 72 64 60 64.2 47.5 C57 45.5 47 42.5 37 42 C45 43 54 47 55 57 C56 66 53 74 48 80.5Z" fill="url(#cr2)"/>
<path d="M22 6.5 C16 13 13.5 22 13.8 30 C14.5 39 22 45 30 46.5 C38 47.5 47 48 50.5 55 C53 62 52 72 48 80.5 C53 74 56 66 55.5 57 C55 49 48 43.5 40 42.3 C32 41.5 24 40.5 20 34 C17 28 17.5 14 22 6.5Z" fill="#f7f5f0"/>
<path d="M6 41.8 C13 44.5 21 46.5 29.5 47" fill="none" stroke="#ea9a9a" stroke-width="0.8"/>
<path d="M37.5 42 C46 42.5 56 44.5 64 47.5" fill="none" stroke="#ea9a9a" stroke-width="0.8"/>
<g fill="#f8ae88">
<rect x="75" y="13" width="4" height="38"/>
<path d="M79 33 L97.5 13 H101.5 L81 35.5Z"/>
<path d="M84 28.5 L101.5 51 H97 L81.5 31.5Z"/>
<rect x="114" y="13" width="4" height="38"/>
<path d="M106.5 13 H118 V16.5 H110 V19 H106.5Z"/>
</g>
<text x="0" y="0" transform="translate(126,51.5) scale(0.72,1)" font-size="52" font-weight="bold" fill="#7dc57a">源</text>
<text x="0" y="0" transform="translate(168.5,51) scale(0.72,1)" font-size="52" font-weight="bold" fill="#f8ae88">码</text>
<text x="70" y="79" font-family="Liberation Mono" font-size="19" fill="#7dc57a" letter-spacing="6.4">k1ym.com</text>
<path d="M123.5 9 L127 14 L130.5 6 L134 14 L137.5 9 L136 19 H125Z" fill="#7dc57a"/><rect x="125" y="19" width="11" height="2.5" fill="#7dc57a"/>
</svg>
</body></html>
